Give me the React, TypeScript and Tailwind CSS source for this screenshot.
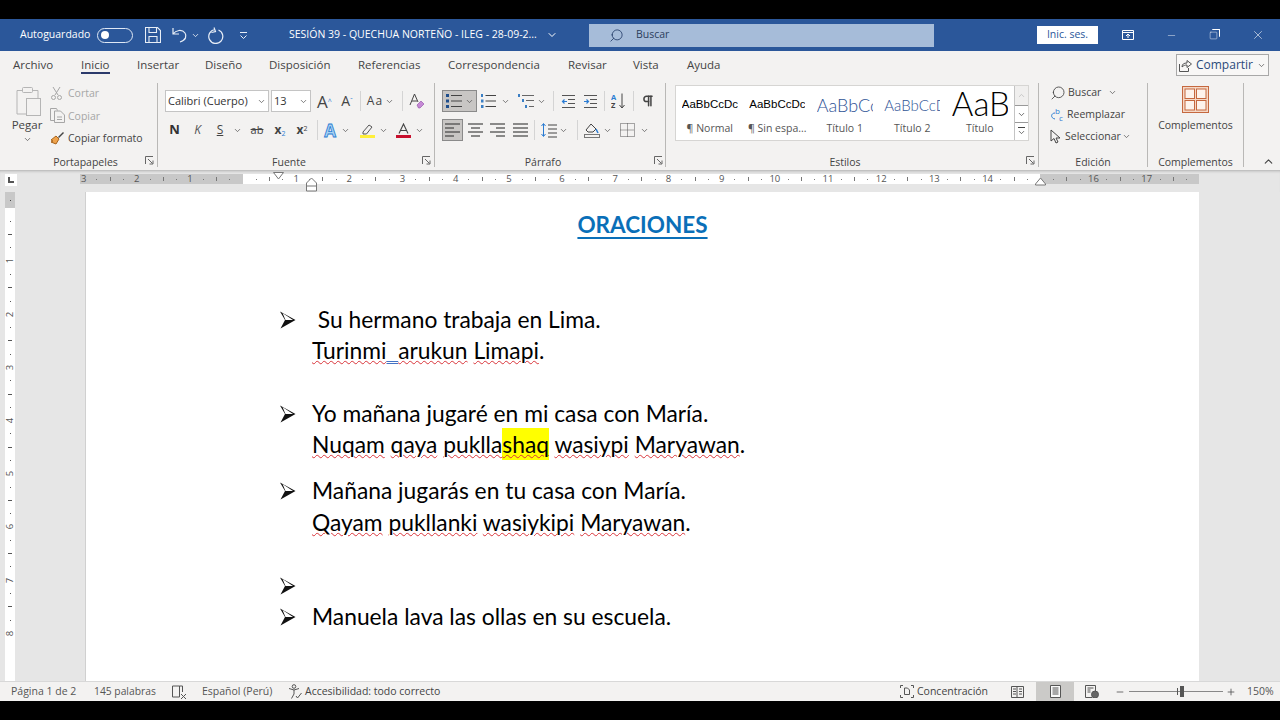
import type { ReactNode } from "react";
import { ChevronDown, ChevronUp, Minus, Pilcrow, Plus, Search, Square, X } from "lucide-react";

const ui = "font-['Open_Sans','Noto_Sans',sans-serif]";

function Chev({ className = "" }: { className?: string }) {
  return <ChevronDown size={9} strokeWidth={2} className={"shrink-0 text-[#555] " + className} />;
}

// fixed width slot in a ribbon row, icons centre inside it
function Cell({ w, children }: { w: string; children?: ReactNode }) {
  return <div className={"flex h-full shrink-0 items-center justify-center " + w}>{children}</div>;
}

function Launcher() {
  return (
    <svg width="9" height="9" viewBox="0 0 9 9" fill="none" stroke="#666">
      <path d="M.5 8V.5H8M3 3l4.5 4.5M4.5 8H8V4.5" />
    </svg>
  );
}

function Group({ w, label, labelClass = "", children }: { w: string; label: string; labelClass?: string; children: ReactNode }) {
  return (
    <div className={"relative flex h-full shrink-0 flex-col border-r border-[#b9b8b6] " + w}>
      <div className="h-[72px] shrink-0">{children}</div>
      <div className={"text-center text-[10.5px] leading-[15px] text-[#444] " + labelClass}>{label}</div>
    </div>
  );
}

function Lines({ right = false, center = false, full = false }: { right?: boolean; center?: boolean; full?: boolean }) {
  const w = 15;
  return (
    <svg width={w} height="14" viewBox={`0 0 ${w} 14`} stroke="#444" strokeWidth="1.2">
      {[1, 5, 9, 13].map((y, i) => {
        const len = i % 2 && !full ? 9 : w;
        const x = right ? w - len : center ? (w - len) / 2 : 0;
        return <path key={y} d={`M${x} ${y}h${len}`} />;
      })}
    </svg>
  );
}

function BulletIcon() {
  return (
    <svg width="16" height="16" viewBox="0 0 16 16">
      <path d="M0 1h3v3H0zM0 6.5h3v3H0zM0 12h3v3H0z" fill="#1f4e8c" />
      <path d="M5 2.5h11M5 8h11M5 13.5h11" stroke="#444" strokeWidth="1.2" />
    </svg>
  );
}

function NumberIcon() {
  return (
    <svg width="16" height="16" viewBox="0 0 16 16">
      <path d="M1 1h2v3H1zM1 6.5h2.5v3H1zM1 12h2.5v3H1z" fill="#3b7fc4" />
      <path d="M5.5 2.5H16M5.5 8H16M5.5 13.5H16" stroke="#444" strokeWidth="1.2" />
    </svg>
  );
}

function MultiIcon() {
  return (
    <svg width="18" height="16" viewBox="0 0 18 16">
      <path d="M0 1h2v3H0zM4 6h2v3H4zM7 12h2v3H7z" fill="#3b7fc4" />
      <path d="M4 2.5h12M8 7.5h8M11 13.5h5" stroke="#666" strokeWidth="1.2" />
    </svg>
  );
}

function IndentIcon({ flip = false }: { flip?: boolean }) {
  return (
    <svg width="15" height="13" viewBox="0 0 15 13">
      <path d="M1 .5h13M7 4.5h7M7 8.5h7M1 12.5h13" stroke="#555" />
      <path d={flip ? "M1 6.5h4M3.5 4.5l2 2-2 2" : "M6 6.5H2M3.5 4.5l-2 2 2 2"} stroke="#2b7cd3" fill="none" strokeWidth="1.2" />
    </svg>
  );
}

function StyleItem({ sample, label, className }: { sample: string; label: string; className: string }) {
  return (
    <div className="flex w-[67.5px] shrink-0 flex-col items-center overflow-hidden">
      <div className="flex h-[30px] w-[56px] items-center overflow-hidden whitespace-nowrap">
        <span className={className}>{sample}</span>
      </div>
      <div className="mt-[1px] text-[10.5px] whitespace-nowrap text-[#555]">{label}</div>
    </div>
  );
}

function Ribbon() {
  const light = "font-['Lato',sans-serif] font-light text-[#2f5496]";
  return (
    <div className={"flex h-[90px] shrink-0 items-stretch bg-[#f3f2f1] pt-[3px] pb-[3px] " + ui}>
      <Group w="w-[158px]" label="Portapapeles" labelClass="pl-[14px]">
        <div className="flex h-full">
          <div className="ml-[12px] flex w-[30px] flex-col items-center pt-[3px]">
            <svg width="27" height="30" viewBox="0 0 27 30" fill="none" stroke="#b5b5b5">
              <path d="M3 4.5H8.5M18.5 4.5H24V12M3 4.5V28H12" />
              <rect x="8.5" y="1.5" width="10" height="5" rx="1" />
              <rect x="12.5" y="12.5" width="14" height="17" fill="#f3f2f1" />
            </svg>
            <div className="mt-[1px] text-[11.5px] leading-[15px] text-[#444]">Pegar</div>
            <Chev className="mt-[3px]" />
          </div>
          <div className="ml-[8px] flex flex-col gap-[2.5px] text-[10.5px] leading-[20px]">
            <div className="flex h-[20px] items-center gap-[5px] text-[#a6a6a6]">
              <svg width="13" height="15" viewBox="0 0 13 15" fill="none" stroke="#a6a6a6">
                <path d="M3 1l5 8M10 1L5 9" />
                <circle cx="3.5" cy="11.5" r="2" />
                <circle cx="9.5" cy="11.5" r="2" />
              </svg>
              Cortar
            </div>
            <div className="flex h-[20px] items-center gap-[3px] text-[#a6a6a6]">
              <svg width="15" height="15" viewBox="0 0 15 15" fill="none" stroke="#a6a6a6">
                <path d="M4 12.5H.5V.5h6l1 2" />
                <path d="M4.5 3h6l4 4v7.5h-10zM7 9h5M7 11.5h5" />
              </svg>
              Copiar
            </div>
            <div className="flex h-[20px] items-center gap-[3px] whitespace-nowrap text-[#444]">
              <svg width="15" height="14" viewBox="0 0 15 14">
                <path d="M6 5l3 3-3 5-5-2 2-1-2-1z" fill="#eea24b" stroke="#a8641c" />
                <path d="M8 6l5-5 1 1-5 5z" fill="#444" />
              </svg>
              Copiar formato
            </div>
          </div>
        </div>
        <div className="absolute right-[3px] bottom-[2px]">
          <Launcher />
        </div>
      </Group>

      <Group w="w-[277px]" label="Fuente" labelClass="pr-[14px]">
        <div className="mt-[7px] flex h-[22px] items-center pl-[7px] text-[#333]">
          <div className="flex h-[22px] w-[104px] shrink-0 items-center justify-between border border-[#c4c4c4] bg-white px-[2px] text-[11px] whitespace-nowrap">
            Calibri (Cuerpo)
            <Chev />
          </div>
          <div className="ml-[2px] flex h-[22px] w-[40px] shrink-0 items-center justify-between border border-[#c4c4c4] bg-white px-[2px] text-[11px]">
            13
            <Chev />
          </div>
          <Cell w="w-[23px] ml-[2px]">
            <span className="text-[17px] leading-none text-[#444]">A<sup className="text-[7px] text-[#2b7cd3]">^</sup></span>
          </Cell>
          <Cell w="w-[22px]">
            <span className="text-[14px] leading-none text-[#444]">A<sup className="text-[7px] text-[#2b7cd3]">ˇ</sup></span>
          </Cell>
          <div className="ml-[2px] h-[20px] w-px bg-[#d4d4d4]" />
          <Cell w="w-[18px] ml-[5px]">
            <span className="text-[12px] tracking-[1px] text-[#444]">Aa</span>
          </Cell>
          <Chev className="ml-[1px]" />
          <div className="ml-[8px] h-[20px] w-px bg-[#d4d4d4]" />
          <Cell w="w-[28px]">
            <svg width="16" height="16" viewBox="0 0 16 16" fill="none">
              <path d="M1 12L5.5 1 9 9M3 8h5" stroke="#444" />
              <path d="M8 12l4-4 3 3-4 4H9.5z" fill="#c689d6" stroke="#8b4aa3" strokeWidth=".6" />
            </svg>
          </Cell>
        </div>
        <div className="mt-[7px] flex h-[22px] items-center pl-[5px] text-[#444]">
          <Cell w="w-[23px]"><span className="text-[13px] font-bold text-[#333]">N</span></Cell>
          <Cell w="w-[23px]"><span className="text-[12px] text-[#555] italic">K</span></Cell>
          <Cell w="w-[22px]"><span className="text-[12px] underline">S</span></Cell>
          <Cell w="w-[12px]"><Chev /></Cell>
          <Cell w="w-[28px]"><span className="text-[11px] line-through">ab</span></Cell>
          <Cell w="w-[18px]">
            <span className="text-[12px] font-bold">x<sub className="text-[7px] font-normal text-[#2b7cd3]">2</sub></span>
          </Cell>
          <Cell w="w-[26px]">
            <span className="text-[12px] font-bold">x<sup className="text-[7px] font-normal">2</sup></span>
          </Cell>
          <div className="mx-[2px] h-[20px] w-px bg-[#d4d4d4]" />
          <Cell w="w-[20px]">
            <span className="text-[17px] leading-none font-bold text-[#a9d3f2] [-webkit-text-stroke:0.8px_#2b7cd3]">A</span>
          </Cell>
          <Cell w="w-[10px]"><Chev /></Cell>
          <Cell w="w-[22px] ml-[6px]">
            <svg width="15" height="15" viewBox="0 0 15 15" fill="none">
              <path d="M3 9l6-7 3 2-5.5 7H3z" stroke="#555" />
              <rect x="0" y="12" width="15" height="3" fill="#ffef3a" />
            </svg>
          </Cell>
          <Cell w="w-[10px]"><Chev /></Cell>
          <Cell w="w-[20px] ml-[5px]">
            <svg width="15" height="15" viewBox="0 0 15 15" fill="none">
              <path d="M3 10.5L7.5 1l4.5 9.5M4.5 7.5h6" stroke="#444" strokeWidth="1.1" />
              <rect x="0" y="12" width="15" height="3" fill="#c8102e" />
            </svg>
          </Cell>
          <Cell w="w-[12px]"><Chev /></Cell>
        </div>
        <div className="absolute right-[3px] bottom-[2px]">
          <Launcher />
        </div>
      </Group>

      <Group w="w-[231px]" label="Párrafo" labelClass="pr-[14px]">
        <div className="mt-[7px] flex h-[22px] items-center pl-[7px]">
          <div className="flex h-[22px] w-[35px] shrink-0 items-center gap-[3px] border border-[#8a8a8a] bg-[#c8c6c4] pl-[3px]">
            <BulletIcon />
            <Chev />
          </div>
          <Cell w="w-[18px] ml-[2px]"><NumberIcon /></Cell>
          <Cell w="w-[16px]"><Chev /></Cell>
          <Cell w="w-[18px] ml-[5px]"><MultiIcon /></Cell>
          <Cell w="w-[10px]"><Chev /></Cell>
          <div className="ml-[7px] h-[20px] w-px bg-[#d4d4d4]" />
          <Cell w="w-[28px]"><IndentIcon /></Cell>
          <Cell w="w-[16px]"><IndentIcon flip /></Cell>
          <div className="ml-[6px] h-[20px] w-px bg-[#d4d4d4]" />
          <Cell w="w-[28px]">
            <svg width="16" height="16" viewBox="0 0 16 16" fill="none">
              <path d="M11 .5v14M8.5 12l2.5 3 2.5-3" stroke="#444" />
              <text x="0" y="7" fontSize="7.5" fill="#2b7cd3" fontWeight="700">A</text>
              <text x="0" y="15" fontSize="7.5" fill="#444" fontWeight="700">Z</text>
            </svg>
          </Cell>
          <div className="h-[20px] w-px bg-[#d4d4d4]" />
          <Cell w="w-[28px]"><Pilcrow size={14} strokeWidth={2.6} className="text-[#444]" /></Cell>
        </div>
        <div className="mt-[7px] flex h-[22px] items-center pl-[7px]">
          <div className="flex h-[22px] w-[21px] shrink-0 items-center justify-center border border-[#8a8a8a] bg-[#c8c6c4]">
            <Lines />
          </div>
          <Cell w="w-[22px] ml-[1px]"><Lines center /></Cell>
          <Cell w="w-[23px]"><Lines right /></Cell>
          <Cell w="w-[22px]"><Lines full /></Cell>
          <div className="ml-[3px] h-[20px] w-px bg-[#d4d4d4]" />
          <Cell w="w-[20px] ml-[4px]">
            <svg width="16" height="15" viewBox="0 0 16 15" fill="none">
              <path d="M2.5 1v12M.5 3l2-2.5L4.5 3M.5 11l2 2.5 2-2.5" stroke="#2b7cd3" />
              <path d="M7 2h9M7 6h9M7 10h9M7 14h9" stroke="#444" />
            </svg>
          </Cell>
          <Cell w="w-[8px]"><Chev /></Cell>
          <div className="ml-[10px] h-[20px] w-px bg-[#d4d4d4]" />
          <Cell w="w-[20px] ml-[4px]">
            <svg width="16" height="16" viewBox="0 0 16 16" fill="none">
              <path d="M2 8l5-6 5 5-3 3H4z" stroke="#444" />
              <path d="M12 7l2 4" stroke="#2b7cd3" strokeWidth="1.5" />
              <rect x=".5" y="12.5" width="15" height="3" stroke="#777" />
            </svg>
          </Cell>
          <Cell w="w-[10px]"><Chev /></Cell>
          <Cell w="w-[20px] ml-[5px]">
            <svg width="15" height="14" viewBox="0 0 15 14" fill="none" stroke="#555" strokeDasharray="1 1">
              <rect x=".5" y=".5" width="14" height="13" />
              <path d="M.5 7h14M7.5.5v13" />
            </svg>
          </Cell>
          <Cell w="w-[10px] ml-[2px]"><Chev /></Cell>
        </div>
        <div className="absolute right-[2px] bottom-[2px]">
          <Launcher />
        </div>
      </Group>

      <Group w="w-[373px]" label="Estilos" labelClass="pr-[14px]">
        <div className="mt-[2px] ml-[9px] flex h-[56px] w-[354px] items-stretch border border-[#d6d5d3] bg-white">
          <div className="flex min-w-0 flex-1 flex-col overflow-hidden">
            <div className="flex pt-[4px]">
              <StyleItem sample="AaBbCcDc" label="¶ Normal" className="font-['Liberation_Sans',sans-serif] text-[11.5px] text-black" />
              <StyleItem sample="AaBbCcDc" label="¶ Sin espa..." className="font-['Liberation_Sans',sans-serif] text-[11.5px] text-black" />
              <StyleItem sample="AaBbCc" label="Título 1" className={"text-[18px] " + light} />
              <StyleItem sample="AaBbCcD" label="Título 2" className={"text-[15px] " + light} />
              <StyleItem sample="AaB" label="Título" className="-mt-[5px] font-['Lato',sans-serif] text-[33px] leading-[28px] font-light text-black" />
            </div>
          </div>
          <div className="flex w-[14px] shrink-0 flex-col border-l border-[#c4c4c4]">
            <div className="flex h-[19px] items-center justify-center bg-[#f0efee]">
              <ChevronUp size={9} className="text-[#bbb]" />
            </div>
            <div className="flex h-[18px] items-center justify-center border-y border-[#999]">
              <ChevronDown size={9} className="text-[#444]" />
            </div>
            <div className="flex flex-1 flex-col items-center justify-center">
              <div className="h-px w-[7px] bg-[#444]" />
              <ChevronDown size={9} className="text-[#444]" />
            </div>
          </div>
        </div>
        <div className="absolute right-[3px] bottom-[2px]">
          <Launcher />
        </div>
      </Group>

      <Group w="w-[109px]" label="Edición">
        <div className="-mt-[1px] flex flex-col gap-[1px] pl-[11px] text-[10.5px] text-[#444]">
          <div className="flex h-[21px] items-center gap-[2px]">
            <Search size={16} strokeWidth={1.3} className="-scale-x-100 text-[#444]" />
            Buscar
            <Chev className="ml-[5px]" />
          </div>
          <div className="flex h-[21px] items-center gap-[3px]">
            <svg width="14" height="15" viewBox="0 0 14 15" fill="none">
              <text x="5" y="7" fontSize="8" fill="#2b7cd3">b</text>
              <text x="9" y="14" fontSize="8" fill="#2b7cd3">c</text>
              <path d="M5 6C1 6 0 11 5 12" stroke="#2b7cd3" />
            </svg>
            Reemplazar
          </div>
          <div className="flex h-[21px] items-center gap-[4px]">
            <svg width="11" height="15" viewBox="0 0 11 15" fill="none" stroke="#444">
              <path d="M1 1v11l3-2.5 2 4.5 2-1-2-4h4z" />
            </svg>
            Seleccionar
            <Chev className="-ml-[3px]" />
          </div>
        </div>
      </Group>

      <Group w="w-[96px]" label="Complementos">
        <div className="flex flex-col items-center pt-[3px]">
          <svg width="27" height="27" viewBox="0 0 27 27" stroke="#c5683f">
            <rect x=".5" y=".5" width="26" height="26" fill="#f5d8c6" />
            <rect x="3" y="3" width="9.5" height="9.5" fill="#fdf3ec" />
            <rect x="14.5" y="3" width="9.5" height="9.5" fill="#fdf3ec" />
            <rect x="3" y="14.5" width="9.5" height="9.5" fill="#fdf3ec" />
            <rect x="14.5" y="14.5" width="9.5" height="9.5" fill="#fdf3ec" />
          </svg>
          <div className="mt-[5px] text-[10.5px] text-[#444]">Complementos</div>
        </div>
      </Group>

      <div className="flex flex-1 items-end justify-center pl-[12px]">
        <ChevronUp size={13} className="-mb-[1px] text-[#444]" />
      </div>
    </div>
  );
}

// one centimetre of ruler: three marks then the number
function RulerCm({ n }: { n?: number }) {
  return (
    <>
      <span className="flex w-[13.3px] shrink-0 justify-center"><span className="h-px w-px bg-[#777]" /></span>
      <span className="flex w-[13.3px] shrink-0 justify-center"><span className="h-[4px] w-px bg-[#777]" /></span>
      <span className="flex w-[13.3px] shrink-0 justify-center"><span className="h-px w-px bg-[#777]" /></span>
      <span className="flex w-[13.3px] shrink-0 justify-center text-[9.5px] text-[#555]">{n}</span>
    </>
  );
}

function Ruler() {
  const inner = Array.from({ length: 15 }, (_, i) => i + 1);
  return (
    <div className={"relative flex h-[22px] shrink-0 bg-[#e6e6e6] shadow-[inset_0_3px_3px_-2px_rgba(0,0,0,0.25)] " + ui}>
      <div className="mt-[4px] ml-[5px] flex h-[12px] w-[12px] items-center justify-center bg-white">
        <span className="h-[6px] w-[6px] border-b-2 border-l-2 border-[#555]" />
      </div>
      <div className="mt-[4px] ml-[63px] flex h-[10px] w-[163px] items-center overflow-hidden bg-[#c8c8c8]">
        <div className="-ml-[3px] flex items-center">
          <span className="flex w-[13.3px] shrink-0 justify-center text-[9.5px] text-[#555]">3</span>
          <RulerCm n={2} />
          <RulerCm n={1} />
          <RulerCm />
        </div>
      </div>
      <div className="mt-[4px] flex h-[10px] w-[797px] items-center overflow-hidden bg-white pl-[6.6px]">
        {inner.map((n) => (
          <RulerCm key={n} n={n === 15 ? undefined : n} />
        ))}
      </div>
      <div className="mt-[4px] flex h-[10px] w-[159px] items-center overflow-hidden bg-[#c8c8c8] pl-[7px]">
        <RulerCm n={16} />
        <RulerCm n={17} />
        <RulerCm />
      </div>
      {/* indent markers sit over the ruler */}
      <svg className="absolute top-[2px] left-[273px]" width="11" height="8" viewBox="0 0 11 8" fill="#fff" stroke="#777">
        <path d="M.5.5h10L5.5 7z" />
      </svg>
      <svg className="absolute top-[7px] left-[306px]" width="11" height="15" viewBox="0 0 11 15" fill="#fff" stroke="#777">
        <path d="M.5 6l5-5 5 5v3H.5zM.5 9v5h10V9" />
      </svg>
      <svg className="absolute top-[7px] left-[1035px]" width="11" height="9" viewBox="0 0 11 9" fill="#fff" stroke="#777">
        <path d="M.5 7l5-6 5 6v1H.5z" />
      </svg>
    </div>
  );
}

function VRulerCm({ n }: { n?: number }) {
  return (
    <>
      <span className="flex h-[13.3px] shrink-0 items-center justify-center"><span className="h-px w-px bg-[#555]" /></span>
      <span className="flex h-[13.3px] shrink-0 items-center justify-center"><span className="h-px w-[4px] bg-[#555]" /></span>
      <span className="flex h-[13.3px] shrink-0 items-center justify-center"><span className="h-px w-px bg-[#555]" /></span>
      <span className="flex h-[13.3px] shrink-0 -rotate-90 items-center justify-center text-[9.5px] text-[#555]">{n}</span>
    </>
  );
}

function Bullet() {
  return (
    <svg className="-ml-[1px] shrink-0" width="16" height="18" viewBox="0 0 16 18">
      <path d="M0 .5L15.5 9 .5 17.5 5 9z" fill="#111" />
      <path d="M2.5 2L13 9H5.5z" fill="#fff" />
    </svg>
  );
}

const sp = "underline decoration-wavy decoration-[#d9343a] decoration-1 underline-offset-[1px]";

function Line({ bullet, className = "", children }: { bullet?: boolean; className?: string; children?: ReactNode }) {
  return (
    <div className={"flex h-[31px] items-center " + className}>
      <div className="flex w-[31px] shrink-0 items-center">{bullet && <Bullet />}</div>
      <div className="whitespace-pre">{children}</div>
    </div>
  );
}

function Document() {
  return (
    <div className="flex min-h-0 flex-1 overflow-hidden bg-[#e6e6e6]">
      <div className={"ml-[5px] flex h-full w-[10px] shrink-0 flex-col " + ui}>
        <div className="flex h-[16px] shrink-0 items-center justify-center bg-[#c8c8c8]">
          <span className="h-px w-px bg-[#444]" />
        </div>
        <div className="flex min-h-0 flex-1 flex-col overflow-hidden bg-white pt-[6.6px]">
          {[1, 2, 3, 4, 5, 6, 7, 8].map((n) => (
            <VRulerCm key={n} n={n} />
          ))}
        </div>
      </div>
      <div className="ml-[71px] h-full w-[1113px] shrink-0 bg-white pt-[17px] pl-[195px] font-['Lato',sans-serif] text-[22.8px] text-black shadow-[-1px_0_0_#d0d0d0]">
        <div className="-ml-[195px] flex h-[31px] items-center justify-center text-[22.5px] font-bold text-[#0a6fb8] underline decoration-2 underline-offset-[4px]">
          ORACIONES
        </div>
        <Line bullet className="mt-[64px]">
          {" Su hermano trabaja en Lima."}
        </Line>
        <Line>
          <span className={sp}>Turinmi</span>
          <span className="underline decoration-[#4472c4] decoration-double decoration-1 underline-offset-[2px]">{"  "}</span>
          <span className={sp}>arukun</span> <span className={sp}>Limapi</span>.
        </Line>
        <Line bullet className="mt-[32px]">
          Yo mañana jugaré en mi casa con María.
        </Line>
        <Line>
          <span className={sp}>Nuqam</span> <span className={sp}>qaya</span>{" "}
          <span className={sp}>
            puklla
            <span className="bg-[#ffff00] py-[2px]">shaq</span>
          </span>{" "}
          <span className={sp}>wasiypi</span> <span className={sp}>Maryawan</span>.
        </Line>
        <Line bullet className="mt-[15px]">
          Mañana jugarás en tu casa con María.
        </Line>
        <Line className="mt-[1px]">
          <span className={sp}>Qayam</span> <span className={sp}>pukllanki</span>{" "}
          <span className={sp}>wasiykipi</span> <span className={sp}>Maryawan</span>.
        </Line>
        <Line bullet className="mt-[32px]" />
        <Line bullet>Manuela lava las ollas en su escuela.</Line>
      </div>
    </div>
  );
}

function StatusBar() {
  return (
    <div className={"flex h-[20px] shrink-0 items-center border-t border-[#d8d8d8] bg-[#f3f2f1] text-[10.5px] text-[#555] " + ui}>
      <span className="ml-[11px] w-[83px] shrink-0 whitespace-nowrap">Página 1 de 2</span>
      <span className="w-[78px] shrink-0 text-[10.3px] whitespace-nowrap">145 palabras</span>
      <svg width="15" height="14" viewBox="0 0 15 14" fill="none" stroke="#555">
        <path d="M.5 1h7v11h-7zM7.5 1h3v6M9 9l5 5M14 9l-5 5" />
      </svg>
      <span className="ml-[15px] w-[86px] shrink-0 whitespace-nowrap">Español (Perú)</span>
      <svg width="15" height="15" viewBox="0 0 15 15" fill="none" stroke="#555">
        <circle cx="6" cy="2.5" r="1.8" />
        <path d="M1 4.5l5 1.5 5-1.5M6 6v4l-2.5 4.5M8 12l1.5 2 4-5" />
      </svg>
      <span className="ml-[2px] whitespace-nowrap text-[#444]">Accesibilidad: todo correcto</span>
      <div className="ml-auto flex h-full items-center">
        <svg width="14" height="13" viewBox="0 0 14 13" fill="none" stroke="#555">
          <path d="M.5 3V.5H3M11 .5h2.5V3M13.5 10v2.5H11M3 12.5H.5V10M4.5 9.5V3h3l2 2v4.5z" />
        </svg>
        <span className="ml-[3px] w-[94px] whitespace-nowrap text-[#444]">Concentración</span>
        <svg width="13" height="12" viewBox="0 0 13 12" fill="none" stroke="#555">
          <path d="M.5.5H6v11H.5zM6 .5h6.5v11H6M2 3h3M2 5.5h3M2 8h3M8 3h3M8 5.5h3M8 8h3" />
        </svg>
        <div className="ml-[12px] flex h-full w-[38px] items-center justify-center bg-[#cbcac8]">
          <svg width="11" height="13" viewBox="0 0 11 13" fill="#fafafa" stroke="#555">
            <path d="M.5.5h10v12H.5zM2.5 3h6M2.5 5h6M2.5 7h6M2.5 9h6" />
          </svg>
        </div>
        <svg className="ml-[11px]" width="14" height="13" viewBox="0 0 14 13" fill="none" stroke="#555">
          <path d="M.5.5h10v6M7 12.5H.5V.5M2.5 3h6M2.5 5h3M2.5 7h3" />
          <circle cx="10" cy="9.5" r="3.5" fill="#666" />
        </svg>
        <Minus size={10} className="ml-[16px] text-[#555]" />
        <div className="relative mr-[2px] ml-[4px] h-px w-[94px] bg-[#888]">
          <div className="absolute top-[-5px] left-[51px] h-[11px] w-[4px] bg-[#555]" />
          <div className="absolute top-[-3px] left-[48px] h-[7px] w-px bg-[#555]" />
        </div>
        <Plus size={10} className="ml-[1px] text-[#555]" />
        <span className="mr-[7px] ml-[11px] w-[26px] whitespace-nowrap">150%</span>
      </div>
    </div>
  );
}

function TitleBar() {
  return (
    <div className={"flex h-[32px] shrink-0 items-center bg-[#2b579a] text-white " + ui}>
      <span className="ml-[20px] w-[77px] shrink-0 text-[10.5px] whitespace-nowrap">Autoguardado</span>
      <div className="flex h-[15px] w-[36px] shrink-0 items-center rounded-full border border-[#dfe8f5] pl-[3px]">
        <span className="h-[8px] w-[8px] rounded-full bg-white" />
      </div>
      <svg className="ml-[12px]" width="16" height="16" viewBox="0 0 16 16" fill="none" stroke="#e8eef7" strokeWidth="1.1">
        <path d="M.5.5h12l3 3v12H.5zM4 .5v5h7.5v-5M4 15.5v-6h8v6" />
      </svg>
      <svg className="ml-[11px]" width="16" height="16" viewBox="0 0 16 16" fill="none" stroke="#e8eef7" strokeWidth="1.2">
        <path d="M1 1v6h6M1 7c3-4 9-5 12-1 2 3 1 7-5 9" />
      </svg>
      <ChevronDown size={9} className="ml-[3px] text-white" />
      <svg className="ml-[8px]" width="16" height="17" viewBox="0 0 16 17" fill="none" stroke="#e8eef7" strokeWidth="1.2">
        <path d="M6 .5l1.5 4-4 1M10.5 3a7 7 0 1 1-3.5-.5" />
      </svg>
      <svg className="ml-[15px]" width="9" height="9" viewBox="0 0 9 9" fill="none" stroke="#e8eef7">
        <path d="M1 1.5h7M1.5 4.5l3 3 3-3" />
      </svg>
      <span className="ml-[41px] w-[257px] shrink-0 text-[10.5px] whitespace-nowrap">SESIÓN 39 - QUECHUA NORTEÑO - ILEG - 28-09-2...</span>
      <ChevronDown size={12} className="text-white" />
      <div className="ml-[31px] flex h-[23px] w-[345px] shrink-0 items-center bg-[#a6bcd9] text-[10.5px] text-[#2c3e5c]">
        <Search size={15} strokeWidth={1.3} className="ml-[20px] -scale-x-100 text-[#1f3864]" />
        <span className="ml-[12px]">Buscar</span>
      </div>
      <div className="ml-[103px] flex h-[18px] w-[61px] shrink-0 items-center justify-center bg-white text-[10.5px] text-[#2b579a]">
        Inic. ses.
      </div>
      <svg className="ml-[24px]" width="12" height="10" viewBox="0 0 12 10" fill="none" stroke="#fff">
        <path d="M.5.5h11v9H.5zM.5 2.5h11M6 8V4M4 6l2-2 2 2" />
      </svg>
      <Minus size={11} strokeWidth={1} className="ml-[32px] text-white" />
      <div className="relative ml-[32px] h-[9px] w-[9px]">
        <Square size={9} strokeWidth={1.2} className="text-white" />
        <div className="absolute -top-[2px] -right-[2px] h-[8px] w-[8px] rounded-[1px] border-t border-r border-white" />
      </div>
      <X size={14} strokeWidth={1} className="ml-[33px] text-white" />
    </div>
  );
}

function Tabs() {
  const tabs: [string, string][] = [
    ["Insertar", "w-[68px]"],
    ["Diseño", "w-[64px]"],
    ["Disposición", "w-[89px]"],
    ["Referencias", "w-[90px]"],
    ["Correspondencia", "w-[120px]"],
    ["Revisar", "w-[65px]"],
    ["Vista", "w-[54px]"],
    ["Ayuda", "w-[54px]"],
  ];
  return (
    <div className={"flex h-[29px] shrink-0 items-center bg-[#f3f2f1] pb-[1px] pl-[13px] text-[11.5px] text-[#444] " + ui}>
      <div className="w-[68px]">Archivo</div>
      <div className="w-[56px]">
        <span className="relative font-medium">
          Inicio
          <span className="absolute right-0 -bottom-[2px] left-0 h-[2px] bg-[#2b3a6b]" />
        </span>
      </div>
      {tabs.map(([t, w]) => (
        <div key={t} className={"whitespace-nowrap " + w}>
          {t}
        </div>
      ))}
      <div className="mr-[11px] ml-auto flex h-[22px] w-[93px] items-center justify-center gap-[4px] border border-[#a8a8a8] bg-[#f8f7f6] text-[12px] text-[#2b4a7a]">
        <svg width="13" height="13" viewBox="0 0 13 13" fill="none" stroke="#555">
          <path d="M.5 5v7.5h9V9M3 8c0-3 2-4 5-4V1.5L12.5 5 8 8.5V6C6 6 4.5 6.5 3 8z" />
        </svg>
        Compartir
        <Chev />
      </div>
    </div>
  );
}

export default function App() {
  return (
    <div className="flex h-[720px] w-[1280px] flex-col overflow-hidden bg-black pt-[19px] pb-[19px]">
      <TitleBar />
      <Tabs />
      <Ribbon />
      <Ruler />
      <Document />
      <StatusBar />
    </div>
  );
}
